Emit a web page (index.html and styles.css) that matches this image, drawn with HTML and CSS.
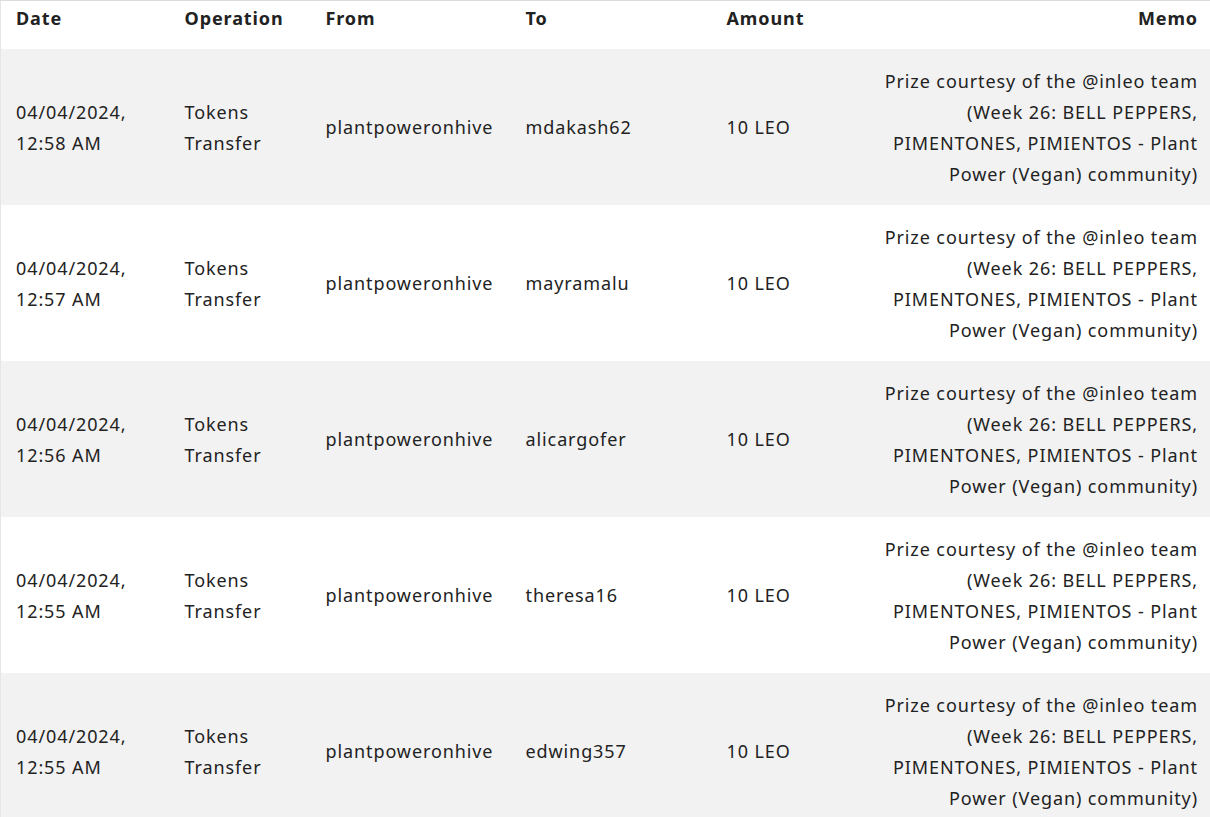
FILE: index.html
```html
<!DOCTYPE html>
<html>
<head>
<meta charset="utf-8">
<link rel="stylesheet" href="styles.css">
</head>
<body>
<table class="tx">
  <colgroup>
    <col class="c-date"><col class="c-op"><col class="c-from"><col class="c-to"><col class="c-amt"><col class="c-memo">
  </colgroup>
  <thead>
    <tr><th>Date</th><th>Operation</th><th>From</th><th>To</th><th>Amount</th><th class="memo">Memo</th></tr>
  </thead>
  <tbody>
    <tr><td>04/04/2024,<br>12:58 AM</td><td>Tokens<br>Transfer</td><td>plantpoweronhive</td><td>mdakash62</td><td>10 LEO</td><td class="memo">Prize courtesy of the @inleo team (Week 26: BELL PEPPERS, PIMENTONES, PIMIENTOS - Plant Power (Vegan) community)</td></tr>
    <tr><td>04/04/2024,<br>12:57 AM</td><td>Tokens<br>Transfer</td><td>plantpoweronhive</td><td>mayramalu</td><td>10 LEO</td><td class="memo">Prize courtesy of the @inleo team (Week 26: BELL PEPPERS, PIMENTONES, PIMIENTOS - Plant Power (Vegan) community)</td></tr>
    <tr><td>04/04/2024,<br>12:56 AM</td><td>Tokens<br>Transfer</td><td>plantpoweronhive</td><td>alicargofer</td><td>10 LEO</td><td class="memo">Prize courtesy of the @inleo team (Week 26: BELL PEPPERS, PIMENTONES, PIMIENTOS - Plant Power (Vegan) community)</td></tr>
    <tr><td>04/04/2024,<br>12:55 AM</td><td>Tokens<br>Transfer</td><td>plantpoweronhive</td><td>theresa16</td><td>10 LEO</td><td class="memo">Prize courtesy of the @inleo team (Week 26: BELL PEPPERS, PIMENTONES, PIMIENTOS - Plant Power (Vegan) community)</td></tr>
    <tr><td>04/04/2024,<br>12:55 AM</td><td>Tokens<br>Transfer</td><td>plantpoweronhive</td><td>edwing357</td><td>10 LEO</td><td class="memo">Prize courtesy of the @inleo team (Week 26: BELL PEPPERS, PIMENTONES, PIMIENTOS - Plant Power (Vegan) community)</td></tr>
  </tbody>
</table>
</body>
</html>
```

FILE: styles.css
```css
html, body {
  margin: 0;
  padding: 0;
  background: #fff;
}
body {
  font-family: "Noto Sans", sans-serif;
  font-size: 18px;
  letter-spacing: 0.9px;
  color: #222;
}
.tx {
  width: 1210px;
  border-collapse: collapse;
  table-layout: fixed;
  border-top: 1px solid #dcdcdc;
  border-left: 1px solid #e6e6e6;
}
.c-date { width: 169px; }
.c-op { width: 141px; }
.c-from { width: 200px; }
.c-to { width: 201px; }
.c-amt { width: 150px; }
.c-memo { width: auto; }
th {
  font-weight: 700;
  text-align: left;
  height: 48px;
  padding: 0 15px;
  vertical-align: middle;
  box-sizing: border-box;
  line-height: 20px;
  padding-bottom: 13px;
}
td {
  padding: 17px 15px 15px;
  line-height: 31px;
  vertical-align: middle;
}
tbody tr:nth-child(odd) { background: #f2f2f2; }
.memo { text-align: right; padding-right: 12px; }
```
